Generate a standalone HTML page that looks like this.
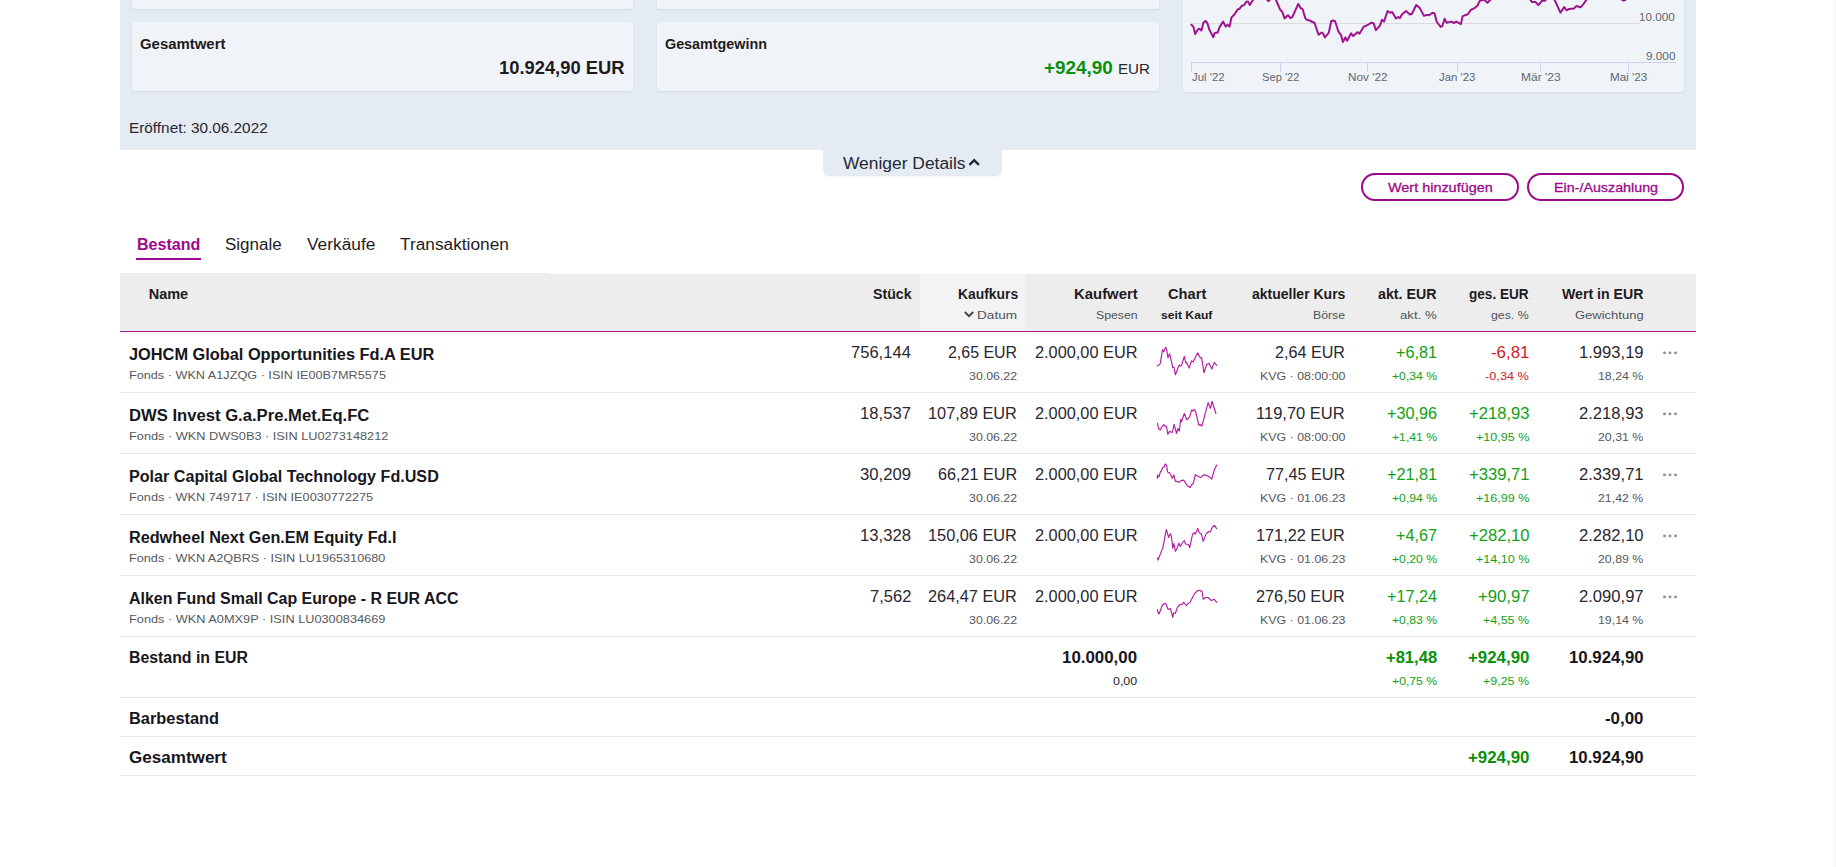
<!DOCTYPE html>
<html><head><meta charset="utf-8"><style>
html,body{margin:0;padding:0;background:#fff;width:1836px;height:867px;overflow:hidden;position:relative}
body{font-family:"Liberation Sans",sans-serif}
.t{position:absolute;white-space:nowrap;transform-origin:0 0}
.b{position:absolute;box-sizing:border-box}
.ov{position:absolute;left:0;top:0}
</style></head><body>
<div class="b" style="left:120px;top:0;width:1576px;height:150px;background:#e4ebf2"></div>
<div class="b" style="left:132px;top:-20px;width:500.5px;height:29px;background:#f0f4f8;border-radius:3px;box-shadow:0 1px 2px rgba(120,140,160,.16)"></div>
<div class="b" style="left:656.5px;top:-20px;width:502px;height:29px;background:#f0f4f8;border-radius:3px;box-shadow:0 1px 2px rgba(120,140,160,.16)"></div>
<div class="b" style="left:132px;top:22px;width:500.5px;height:68.5px;background:#f0f4f8;border-radius:3px;box-shadow:0 1px 2px rgba(120,140,160,.16)"></div>
<div class="b" style="left:656.5px;top:22px;width:502px;height:68.5px;background:#f0f4f8;border-radius:3px;box-shadow:0 1px 2px rgba(120,140,160,.16)"></div>
<div class="b" style="left:1183px;top:-20px;width:501px;height:111.5px;background:#f0f4f8;border-radius:3px;box-shadow:0 1px 2px rgba(120,140,160,.16)"></div>
<div class="b" style="left:822.5px;top:140px;width:179px;height:35px;background:#e4ebf2;border-radius:0 0 6px 6px;box-shadow:0 2px 2px -1px rgba(120,140,160,.25)"></div>
<div class="b" style="left:1361px;top:173px;width:158px;height:28px;border:2px solid #9a0a8a;border-radius:14px"></div>
<div class="b" style="left:1527px;top:173px;width:157px;height:28px;border:2px solid #9a0a8a;border-radius:14px"></div>
<div class="b" style="left:136px;top:258px;width:65px;height:2px;background:#9a0a8a"></div>
<div class="b" style="left:120px;top:273px;width:430px;height:58px;background:#ededed"></div>
<div class="b" style="left:550px;top:274px;width:1146px;height:57px;background:#ededed"></div>
<div class="b" style="left:920px;top:274px;width:105px;height:57px;background:#f3f3f3"></div>
<div class="b" style="left:1833px;top:0;width:3px;height:867px;background:#f9f9f9"></div>
<div class="b" style="left:120px;top:330.5px;width:1576px;height:1.5px;background:#a8208f"></div>
<div class="b" style="left:120px;top:392px;width:1576px;height:1px;background:#e9e9e9"></div>
<div class="b" style="left:120px;top:453px;width:1576px;height:1px;background:#e9e9e9"></div>
<div class="b" style="left:120px;top:514px;width:1576px;height:1px;background:#e9e9e9"></div>
<div class="b" style="left:120px;top:575px;width:1576px;height:1px;background:#e9e9e9"></div>
<div class="b" style="left:120px;top:636px;width:1576px;height:1px;background:#e9e9e9"></div>
<div class="b" style="left:120px;top:697px;width:1576px;height:1px;background:#e9e9e9"></div>
<div class="b" style="left:120px;top:736px;width:1576px;height:1px;background:#e9e9e9"></div>
<div class="b" style="left:120px;top:775px;width:1576px;height:1px;background:#e9e9e9"></div>
<svg class="ov" width="1836" height="867" viewBox="0 0 1836 867">
<line x1="1191" y1="23.5" x2="1640" y2="23.5" stroke="#dcdcdc" stroke-width="1"/>
<line x1="1191" y1="62.5" x2="1676" y2="62.5" stroke="#ccd1ee" stroke-width="1"/>
<line x1="1191.5" y1="62" x2="1191.5" y2="72" stroke="#ccd1ee" stroke-width="1"/>
<line x1="1280.5" y1="62" x2="1280.5" y2="72" stroke="#ccd1ee" stroke-width="1"/>
<line x1="1367.5" y1="62" x2="1367.5" y2="72" stroke="#ccd1ee" stroke-width="1"/>
<line x1="1457.5" y1="62" x2="1457.5" y2="72" stroke="#ccd1ee" stroke-width="1"/>
<line x1="1540.5" y1="62" x2="1540.5" y2="72" stroke="#ccd1ee" stroke-width="1"/>
<line x1="1628.5" y1="62" x2="1628.5" y2="72" stroke="#ccd1ee" stroke-width="1"/>
<polyline fill="none" stroke="#a0138f" stroke-width="2" stroke-linejoin="round" stroke-linecap="round" points="1191.4,24.8 1193.5,26.9 1195.1,34.0 1197.7,29.7 1199.5,28.7 1201.4,30.5 1203.4,22.7 1205.4,20.9 1207.3,23.0 1209.4,29.7 1213.3,37.2 1214.7,32.9 1217.6,32.6 1219.7,26.9 1223.2,21.6 1225.7,26.6 1227.5,24.8 1229.6,26.6 1231.4,17.7 1234.6,14.2 1237.8,9.2 1239.5,8.9 1241.7,5.7 1243.8,5.3 1246.3,1.8 1248.0,1.4 1249.8,5.0 1253.0,0.0 1258.0,-6.0 1263.0,-3.0 1267.5,0.0 1268.6,1.1 1269.6,0.0 1272.0,-4.0 1276.0,0.0 1279.9,9.2 1282.7,12.7 1284.5,18.4 1288.0,15.2 1290.5,18.1 1292.3,17.0 1298.3,3.9 1300.4,7.8 1302.6,9.2 1305.4,18.4 1306.8,19.8 1309.6,20.5 1314.6,23.0 1318.5,34.7 1321.7,32.6 1323.1,33.3 1324.9,37.5 1328.8,32.6 1331.2,21.2 1333.0,20.5 1335.1,21.2 1338.3,31.2 1341.2,35.4 1342.9,42.1 1345.4,37.5 1347.2,40.7 1351.1,33.3 1353.2,36.1 1357.5,32.2 1359.6,33.6 1363.8,26.6 1366.7,25.5 1371.6,22.7 1373.7,23.4 1375.9,30.1 1379.8,25.8 1381.9,19.8 1384.0,21.6 1387.6,11.0 1390.0,12.7 1392.2,12.0 1396.0,18.4 1398.2,17.0 1399.9,18.1 1402.1,14.2 1406.0,11.0 1409.9,14.5 1412.0,13.8 1416.2,5.0 1419.8,8.1 1424.0,15.9 1426.9,14.9 1429.0,15.2 1432.5,12.7 1434.6,13.5 1436.8,22.0 1440.7,26.9 1442.4,25.8 1444.6,18.8 1446.7,22.7 1451.3,21.6 1454.1,23.0 1456.2,21.6 1460.9,24.1 1462.6,16.3 1465.5,14.9 1467.6,14.5 1471.1,9.6 1474.0,8.5 1477.5,5.7 1479.6,1.1 1481.7,0.0 1484.6,0.0 1487.4,2.8 1490.2,0.0 1500.0,-8.0 1515.0,-10.0 1525.0,-5.0 1530.6,0.0 1532.0,2.1 1535.6,2.1 1538.4,5.0 1540.5,2.8 1541.9,0.7 1544.8,0.7 1545.5,0.0 1550.0,-4.0 1554.7,0.0 1560.4,12.7 1564.2,7.1 1566.7,10.3 1569.2,8.9 1573.8,8.5 1576.6,6.0 1580.5,7.4 1583.4,4.2 1586.2,0.0 1600.0,-10.0 1615.0,-5.0 1622.3,0.0 1623.7,0.7 1625.2,0.0 1632.0,-6.0"/>
<polyline fill="none" stroke="#b21ca2" stroke-width="1.15" stroke-linejoin="round" stroke-linecap="round" points="1157.3,366.0 1157.8,365.2 1159.3,365.0 1160.4,362.9 1162.5,349.7 1163.8,351.8 1165.6,347.3 1166.6,349.2 1167.9,357.7 1169.7,353.8 1172.8,367.6 1173.9,367.1 1175.4,374.8 1179.1,365.0 1180.6,366.0 1181.7,365.0 1184.3,356.4 1185.8,362.9 1186.6,362.4 1189.2,368.1 1191.5,360.8 1193.1,361.9 1197.7,352.8 1200.3,358.0 1201.6,357.7 1204.0,372.8 1206.6,364.5 1209.2,363.4 1211.8,369.1 1214.3,362.4 1216.7,365.5"/>
<polyline fill="none" stroke="#b21ca2" stroke-width="1.15" stroke-linejoin="round" stroke-linecap="round" points="1157.5,423.4 1158.8,429.1 1160.4,429.9 1161.4,427.5 1163.8,424.7 1165.0,426.2 1166.3,426.0 1167.9,434.3 1169.5,431.4 1172.3,432.5 1174.1,424.4 1176.5,433.5 1177.8,428.3 1179.3,431.2 1180.6,419.5 1181.4,421.8 1184.3,413.5 1186.8,419.8 1189.7,416.9 1191.5,410.2 1193.1,410.9 1194.4,409.4 1195.7,412.0 1198.8,425.2 1200.1,424.4 1201.9,426.2 1208.1,402.6 1210.5,408.3 1212.0,401.3 1215.9,413.5"/>
<polyline fill="none" stroke="#b21ca2" stroke-width="1.15" stroke-linejoin="round" stroke-linecap="round" points="1157.3,478.3 1157.5,474.9 1158.6,476.8 1159.3,476.2 1160.4,471.6 1161.4,471.0 1162.7,467.4 1163.8,467.2 1165.3,464.0 1166.6,465.3 1167.6,472.1 1169.7,473.1 1172.3,478.3 1173.9,474.9 1175.4,481.4 1177.5,481.4 1179.3,482.5 1180.9,480.6 1183.7,480.1 1187.4,485.8 1190.2,487.4 1191.5,484.8 1193.1,484.0 1195.4,474.7 1196.7,475.5 1200.3,477.5 1201.4,477.3 1203.5,474.9 1205.0,474.9 1208.9,476.5 1211.8,479.1 1214.3,470.0 1216.7,465.1"/>
<polyline fill="none" stroke="#b21ca2" stroke-width="1.15" stroke-linejoin="round" stroke-linecap="round" points="1157.5,558.0 1158.0,560.1 1163.0,547.1 1166.3,529.5 1168.7,537.5 1170.2,533.6 1171.3,535.7 1172.8,548.1 1173.9,543.5 1175.4,551.3 1176.7,549.2 1178.8,543.2 1180.4,546.6 1181.9,543.5 1184.3,540.6 1185.5,544.0 1188.4,544.5 1189.7,547.6 1192.6,534.1 1194.1,532.6 1195.4,534.1 1197.7,528.4 1199.3,532.8 1201.4,534.1 1203.2,541.4 1206.0,534.1 1208.6,531.5 1210.2,532.0 1212.3,527.4 1214.3,525.3 1216.7,528.7"/>
<polyline fill="none" stroke="#b21ca2" stroke-width="1.15" stroke-linejoin="round" stroke-linecap="round" points="1157.3,609.7 1158.6,613.8 1159.1,613.8 1162.5,605.0 1165.0,603.4 1166.3,604.5 1167.9,609.1 1169.2,609.1 1170.5,608.6 1172.8,617.4 1173.6,612.8 1175.4,613.3 1177.5,607.1 1180.1,604.5 1181.7,604.5 1183.7,602.4 1186.3,605.5 1188.4,603.4 1190.2,602.1 1194.6,593.6 1197.7,590.5 1200.3,590.5 1202.2,592.0 1203.2,599.3 1205.5,597.5 1208.1,597.5 1211.5,600.6 1214.3,599.3 1216.7,602.4"/>
<polyline fill="none" stroke="#1f2a36" stroke-width="2.4" points="969.5,164.8 974.2,160.1 978.9,164.8"/>
<polyline fill="none" stroke="#444" stroke-width="2" points="964.8,312 969,316.2 973.2,312"/>
<circle cx="1664.5" cy="352.9" r="1.45" fill="#8c9094"/>
<circle cx="1670.0" cy="352.9" r="1.45" fill="#8c9094"/>
<circle cx="1675.5" cy="352.9" r="1.45" fill="#8c9094"/>
<circle cx="1664.5" cy="413.9" r="1.45" fill="#8c9094"/>
<circle cx="1670.0" cy="413.9" r="1.45" fill="#8c9094"/>
<circle cx="1675.5" cy="413.9" r="1.45" fill="#8c9094"/>
<circle cx="1664.5" cy="474.9" r="1.45" fill="#8c9094"/>
<circle cx="1670.0" cy="474.9" r="1.45" fill="#8c9094"/>
<circle cx="1675.5" cy="474.9" r="1.45" fill="#8c9094"/>
<circle cx="1664.5" cy="535.9" r="1.45" fill="#8c9094"/>
<circle cx="1670.0" cy="535.9" r="1.45" fill="#8c9094"/>
<circle cx="1675.5" cy="535.9" r="1.45" fill="#8c9094"/>
<circle cx="1664.5" cy="596.9" r="1.45" fill="#8c9094"/>
<circle cx="1670.0" cy="596.9" r="1.45" fill="#8c9094"/>
<circle cx="1675.5" cy="596.9" r="1.45" fill="#8c9094"/>
</svg>
<span class="t" style="left:140.40px;top:37.00px;font-size:14.50px;line-height:14.50px;color:#1e1b1f;font-weight:bold;transform:scaleX(1.0289)">Gesamtwert</span>
<span class="t" style="left:498.70px;top:59.00px;font-size:18.30px;line-height:18.30px;color:#1e1b1f;font-weight:bold;transform:scaleX(1.0032)">10.924,90 EUR</span>
<span class="t" style="left:665.40px;top:37.00px;font-size:14.50px;line-height:14.50px;color:#1e1b1f;font-weight:bold;transform:scaleX(0.9884)">Gesamtgewinn</span>
<span class="t" style="left:1043.50px;top:59.00px;font-size:18.30px;line-height:18.30px;color:#0a900a;font-weight:bold;transform:scaleX(1.0330)">+924,90</span>
<span class="t" style="left:1118.00px;top:61.00px;font-size:15.00px;line-height:15.00px;color:#2a2730;transform:scaleX(1.0095)">EUR</span>
<span class="t" style="left:128.80px;top:121.00px;font-size:14.30px;line-height:14.30px;color:#2a2730;transform:scaleX(1.0727)">Eröffnet: 30.06.2022</span>
<span class="t" style="left:1639.30px;top:12.00px;font-size:11.00px;line-height:11.00px;color:#5f6670;transform:scaleX(1.0625)">10.000</span>
<span class="t" style="left:1645.80px;top:51.00px;font-size:11.00px;line-height:11.00px;color:#5f6670;transform:scaleX(1.0691)">9.000</span>
<span class="t" style="left:1191.80px;top:72.00px;font-size:11.00px;line-height:11.00px;color:#5f6670;transform:scaleX(1.0381)">Jul '22</span>
<span class="t" style="left:1261.90px;top:72.00px;font-size:11.00px;line-height:11.00px;color:#5f6670;transform:scaleX(1.0135)">Sep '22</span>
<span class="t" style="left:1348.40px;top:72.00px;font-size:11.00px;line-height:11.00px;color:#5f6670;transform:scaleX(1.0676)">Nov '22</span>
<span class="t" style="left:1439.00px;top:72.00px;font-size:11.00px;line-height:11.00px;color:#5f6670;transform:scaleX(1.0370)">Jan '23</span>
<span class="t" style="left:1521.00px;top:72.00px;font-size:11.00px;line-height:11.00px;color:#5f6670;transform:scaleX(1.0909)">Mär '23</span>
<span class="t" style="left:1610.00px;top:72.00px;font-size:11.00px;line-height:11.00px;color:#5f6670;transform:scaleX(1.0627)">Mai '23</span>
<span class="t" style="left:842.70px;top:156.00px;font-size:16.00px;line-height:16.00px;color:#1f2a36;transform:scaleX(1.0879)">Weniger Details</span>
<span class="t" style="left:1387.80px;top:181.00px;font-size:13.10px;line-height:13.10px;color:#9a0a8a;-webkit-text-stroke:0.3px #9a0a8a;transform:scaleX(1.1008)">Wert hinzufügen</span>
<span class="t" style="left:1553.80px;top:181.00px;font-size:13.10px;line-height:13.10px;color:#9a0a8a;-webkit-text-stroke:0.3px #9a0a8a;transform:scaleX(1.0912)">Ein-/Auszahlung</span>
<span class="t" style="left:136.90px;top:237.00px;font-size:16.00px;line-height:16.00px;color:#9a0a8a;font-weight:bold;transform:scaleX(1.0048)">Bestand</span>
<span class="t" style="left:225.20px;top:237.00px;font-size:16.00px;line-height:16.00px;color:#1f1d24;transform:scaleX(1.0618)">Signale</span>
<span class="t" style="left:306.70px;top:237.00px;font-size:16.00px;line-height:16.00px;color:#1f1d24;transform:scaleX(1.0823)">Verkäufe</span>
<span class="t" style="left:400.20px;top:237.00px;font-size:16.00px;line-height:16.00px;color:#1f1d24;transform:scaleX(1.0804)">Transaktionen</span>
<span class="t" style="left:148.70px;top:287.00px;font-size:14.50px;line-height:14.50px;color:#1e1b1f;font-weight:bold">Name</span>
<span class="t" style="left:873.40px;top:287.00px;font-size:14.50px;line-height:14.50px;color:#1e1b1f;font-weight:bold;transform:scaleX(0.9772)">Stück</span>
<span class="t" style="left:957.60px;top:287.00px;font-size:14.50px;line-height:14.50px;color:#1e1b1f;font-weight:bold;transform:scaleX(0.9571)">Kaufkurs</span>
<span class="t" style="left:977.40px;top:310.00px;font-size:11.30px;line-height:11.30px;color:#50535a;transform:scaleX(1.2042)">Datum</span>
<span class="t" style="left:1073.50px;top:287.00px;font-size:14.50px;line-height:14.50px;color:#1e1b1f;font-weight:bold;transform:scaleX(1.0274)">Kaufwert</span>
<span class="t" style="left:1095.60px;top:310.00px;font-size:11.30px;line-height:11.30px;color:#50535a;transform:scaleX(1.0862)">Spesen</span>
<span class="t" style="left:1167.50px;top:287.00px;font-size:14.50px;line-height:14.50px;color:#1e1b1f;font-weight:bold;transform:scaleX(1.0106)">Chart</span>
<span class="t" style="left:1160.80px;top:310.00px;font-size:11.30px;line-height:11.30px;color:#1e1b1f;font-weight:bold;transform:scaleX(1.0774)">seit Kauf</span>
<span class="t" style="left:1251.80px;top:287.00px;font-size:14.50px;line-height:14.50px;color:#1e1b1f;font-weight:bold;transform:scaleX(0.9659)">aktueller Kurs</span>
<span class="t" style="left:1313.20px;top:310.00px;font-size:11.30px;line-height:11.30px;color:#50535a;transform:scaleX(1.0847)">Börse</span>
<span class="t" style="left:1378.30px;top:287.00px;font-size:14.50px;line-height:14.50px;color:#1e1b1f;font-weight:bold;transform:scaleX(0.9799)">akt. EUR</span>
<span class="t" style="left:1399.90px;top:310.00px;font-size:11.30px;line-height:11.30px;color:#50535a;transform:scaleX(1.1720)">akt. %</span>
<span class="t" style="left:1469.30px;top:287.00px;font-size:14.50px;line-height:14.50px;color:#1e1b1f;font-weight:bold;transform:scaleX(0.9356)">ges. EUR</span>
<span class="t" style="left:1491.30px;top:310.00px;font-size:11.30px;line-height:11.30px;color:#50535a;transform:scaleX(1.0899)">ges. %</span>
<span class="t" style="left:1562.00px;top:287.00px;font-size:14.50px;line-height:14.50px;color:#1e1b1f;font-weight:bold;transform:scaleX(0.9749)">Wert in EUR</span>
<span class="t" style="left:1574.50px;top:310.00px;font-size:11.30px;line-height:11.30px;color:#50535a;transform:scaleX(1.1508)">Gewichtung</span>
<span class="t" style="left:128.60px;top:347.00px;font-size:16.00px;line-height:16.00px;color:#17161c;font-weight:bold;transform:scaleX(1.0211)">JOHCM Global Opportunities Fd.A EUR</span>
<span class="t" style="left:128.60px;top:369.00px;font-size:11.60px;line-height:11.60px;color:#57585c;transform:scaleX(1.0926)">Fonds · WKN A1JZQG · ISIN IE00B7MR5575</span>
<span class="t" style="left:851.40px;top:345.00px;font-size:16.00px;line-height:16.00px;color:#2a2730;transform:scaleX(1.0346)">756,144</span>
<span class="t" style="left:948.10px;top:345.00px;font-size:16.00px;line-height:16.00px;color:#2a2730;transform:scaleX(0.9957)">2,65 EUR</span>
<span class="t" style="left:968.80px;top:370.00px;font-size:11.60px;line-height:11.60px;color:#57585c;transform:scaleX(1.0664)">30.06.22</span>
<span class="t" style="left:1034.50px;top:345.00px;font-size:16.00px;line-height:16.00px;color:#2a2730;transform:scaleX(1.0199)">2.000,00 EUR</span>
<span class="t" style="left:1275.00px;top:345.00px;font-size:16.00px;line-height:16.00px;color:#2a2730;transform:scaleX(1.0086)">2,64 EUR</span>
<span class="t" style="left:1259.50px;top:370.00px;font-size:11.60px;line-height:11.60px;color:#57585c;transform:scaleX(1.0688)">KVG · 08:00:00</span>
<span class="t" style="left:1395.80px;top:345.00px;font-size:16.00px;line-height:16.00px;color:#14a014;transform:scaleX(1.0099)">+6,81</span>
<span class="t" style="left:1391.60px;top:370.00px;font-size:11.60px;line-height:11.60px;color:#14a014;transform:scaleX(1.0513)">+0,34 %</span>
<span class="t" style="left:1490.60px;top:345.00px;font-size:16.00px;line-height:16.00px;color:#cf1b26;transform:scaleX(1.0521)">-6,81</span>
<span class="t" style="left:1485.00px;top:370.00px;font-size:11.60px;line-height:11.60px;color:#cf1b26;transform:scaleX(1.1000)">-0,34 %</span>
<span class="t" style="left:1578.80px;top:345.00px;font-size:16.00px;line-height:16.00px;color:#2a2730;transform:scaleX(1.0369)">1.993,19</span>
<span class="t" style="left:1597.80px;top:370.00px;font-size:11.60px;line-height:11.60px;color:#57585c;transform:scaleX(1.0657)">18,24 %</span>
<span class="t" style="left:128.60px;top:408.00px;font-size:16.00px;line-height:16.00px;color:#17161c;font-weight:bold;transform:scaleX(1.0398)">DWS Invest G.a.Pre.Met.Eq.FC</span>
<span class="t" style="left:128.60px;top:430.00px;font-size:11.60px;line-height:11.60px;color:#57585c;transform:scaleX(1.0996)">Fonds · WKN DWS0B3 · ISIN LU0273148212</span>
<span class="t" style="left:860.30px;top:406.00px;font-size:16.00px;line-height:16.00px;color:#2a2730;transform:scaleX(1.0409)">18,537</span>
<span class="t" style="left:928.30px;top:406.00px;font-size:16.00px;line-height:16.00px;color:#2a2730;transform:scaleX(1.0195)">107,89 EUR</span>
<span class="t" style="left:968.80px;top:431.00px;font-size:11.60px;line-height:11.60px;color:#57585c;transform:scaleX(1.0664)">30.06.22</span>
<span class="t" style="left:1034.50px;top:406.00px;font-size:16.00px;line-height:16.00px;color:#2a2730;transform:scaleX(1.0199)">2.000,00 EUR</span>
<span class="t" style="left:1256.30px;top:406.00px;font-size:16.00px;line-height:16.00px;color:#2a2730;transform:scaleX(1.0314)">119,70 EUR</span>
<span class="t" style="left:1259.50px;top:431.00px;font-size:11.60px;line-height:11.60px;color:#57585c;transform:scaleX(1.0688)">KVG · 08:00:00</span>
<span class="t" style="left:1386.60px;top:406.00px;font-size:16.00px;line-height:16.00px;color:#14a014;transform:scaleX(1.0142)">+30,96</span>
<span class="t" style="left:1391.60px;top:431.00px;font-size:11.60px;line-height:11.60px;color:#14a014;transform:scaleX(1.0513)">+1,41 %</span>
<span class="t" style="left:1468.50px;top:406.00px;font-size:16.00px;line-height:16.00px;color:#14a014;transform:scaleX(1.0377)">+218,93</span>
<span class="t" style="left:1475.50px;top:431.00px;font-size:11.60px;line-height:11.60px;color:#14a014;transform:scaleX(1.0852)">+10,95 %</span>
<span class="t" style="left:1578.80px;top:406.00px;font-size:16.00px;line-height:16.00px;color:#2a2730;transform:scaleX(1.0369)">2.218,93</span>
<span class="t" style="left:1597.80px;top:431.00px;font-size:11.60px;line-height:11.60px;color:#57585c;transform:scaleX(1.0657)">20,31 %</span>
<span class="t" style="left:128.60px;top:469.00px;font-size:16.00px;line-height:16.00px;color:#17161c;font-weight:bold;transform:scaleX(1.0081)">Polar Capital Global Technology Fd.USD</span>
<span class="t" style="left:128.60px;top:491.00px;font-size:11.60px;line-height:11.60px;color:#57585c;transform:scaleX(1.0950)">Fonds · WKN 749717 · ISIN IE0030772275</span>
<span class="t" style="left:860.30px;top:467.00px;font-size:16.00px;line-height:16.00px;color:#2a2730;transform:scaleX(1.0409)">30,209</span>
<span class="t" style="left:937.90px;top:467.00px;font-size:16.00px;line-height:16.00px;color:#2a2730;transform:scaleX(1.0128)">66,21 EUR</span>
<span class="t" style="left:968.80px;top:492.00px;font-size:11.60px;line-height:11.60px;color:#57585c;transform:scaleX(1.0664)">30.06.22</span>
<span class="t" style="left:1034.50px;top:467.00px;font-size:16.00px;line-height:16.00px;color:#2a2730;transform:scaleX(1.0199)">2.000,00 EUR</span>
<span class="t" style="left:1265.80px;top:467.00px;font-size:16.00px;line-height:16.00px;color:#2a2730;transform:scaleX(1.0115)">77,45 EUR</span>
<span class="t" style="left:1259.50px;top:492.00px;font-size:11.60px;line-height:11.60px;color:#57585c;transform:scaleX(1.0688)">KVG · 01.06.23</span>
<span class="t" style="left:1386.60px;top:467.00px;font-size:16.00px;line-height:16.00px;color:#14a014;transform:scaleX(1.0142)">+21,81</span>
<span class="t" style="left:1391.60px;top:492.00px;font-size:11.60px;line-height:11.60px;color:#14a014;transform:scaleX(1.0513)">+0,94 %</span>
<span class="t" style="left:1468.50px;top:467.00px;font-size:16.00px;line-height:16.00px;color:#14a014;transform:scaleX(1.0377)">+339,71</span>
<span class="t" style="left:1475.50px;top:492.00px;font-size:11.60px;line-height:11.60px;color:#14a014;transform:scaleX(1.0852)">+16,99 %</span>
<span class="t" style="left:1578.80px;top:467.00px;font-size:16.00px;line-height:16.00px;color:#2a2730;transform:scaleX(1.0369)">2.339,71</span>
<span class="t" style="left:1597.80px;top:492.00px;font-size:11.60px;line-height:11.60px;color:#57585c;transform:scaleX(1.0657)">21,42 %</span>
<span class="t" style="left:128.60px;top:530.00px;font-size:16.00px;line-height:16.00px;color:#17161c;font-weight:bold;transform:scaleX(1.0129)">Redwheel Next Gen.EM Equity Fd.I</span>
<span class="t" style="left:128.60px;top:552.00px;font-size:11.60px;line-height:11.60px;color:#57585c;transform:scaleX(1.0929)">Fonds · WKN A2QBRS · ISIN LU1965310680</span>
<span class="t" style="left:860.30px;top:528.00px;font-size:16.00px;line-height:16.00px;color:#2a2730;transform:scaleX(1.0409)">13,328</span>
<span class="t" style="left:928.30px;top:528.00px;font-size:16.00px;line-height:16.00px;color:#2a2730;transform:scaleX(1.0195)">150,06 EUR</span>
<span class="t" style="left:968.80px;top:553.00px;font-size:11.60px;line-height:11.60px;color:#57585c;transform:scaleX(1.0664)">30.06.22</span>
<span class="t" style="left:1034.50px;top:528.00px;font-size:16.00px;line-height:16.00px;color:#2a2730;transform:scaleX(1.0199)">2.000,00 EUR</span>
<span class="t" style="left:1256.30px;top:528.00px;font-size:16.00px;line-height:16.00px;color:#2a2730;transform:scaleX(1.0172)">171,22 EUR</span>
<span class="t" style="left:1259.50px;top:553.00px;font-size:11.60px;line-height:11.60px;color:#57585c;transform:scaleX(1.0688)">KVG · 01.06.23</span>
<span class="t" style="left:1395.80px;top:528.00px;font-size:16.00px;line-height:16.00px;color:#14a014;transform:scaleX(1.0099)">+4,67</span>
<span class="t" style="left:1391.60px;top:553.00px;font-size:11.60px;line-height:11.60px;color:#14a014;transform:scaleX(1.0513)">+0,20 %</span>
<span class="t" style="left:1468.50px;top:528.00px;font-size:16.00px;line-height:16.00px;color:#14a014;transform:scaleX(1.0377)">+282,10</span>
<span class="t" style="left:1475.50px;top:553.00px;font-size:11.60px;line-height:11.60px;color:#14a014;transform:scaleX(1.0852)">+14,10 %</span>
<span class="t" style="left:1578.80px;top:528.00px;font-size:16.00px;line-height:16.00px;color:#2a2730;transform:scaleX(1.0369)">2.282,10</span>
<span class="t" style="left:1597.80px;top:553.00px;font-size:11.60px;line-height:11.60px;color:#57585c;transform:scaleX(1.0657)">20,89 %</span>
<span class="t" style="left:128.60px;top:591.00px;font-size:16.00px;line-height:16.00px;color:#17161c;font-weight:bold;transform:scaleX(0.9952)">Alken Fund Small Cap Europe - R EUR ACC</span>
<span class="t" style="left:128.60px;top:613.00px;font-size:11.60px;line-height:11.60px;color:#57585c;transform:scaleX(1.0999)">Fonds · WKN A0MX9P · ISIN LU0300834669</span>
<span class="t" style="left:869.80px;top:589.00px;font-size:16.00px;line-height:16.00px;color:#2a2730;transform:scaleX(1.0350)">7,562</span>
<span class="t" style="left:928.30px;top:589.00px;font-size:16.00px;line-height:16.00px;color:#2a2730;transform:scaleX(1.0195)">264,47 EUR</span>
<span class="t" style="left:968.80px;top:614.00px;font-size:11.60px;line-height:11.60px;color:#57585c;transform:scaleX(1.0664)">30.06.22</span>
<span class="t" style="left:1034.50px;top:589.00px;font-size:16.00px;line-height:16.00px;color:#2a2730;transform:scaleX(1.0199)">2.000,00 EUR</span>
<span class="t" style="left:1256.30px;top:589.00px;font-size:16.00px;line-height:16.00px;color:#2a2730;transform:scaleX(1.0172)">276,50 EUR</span>
<span class="t" style="left:1259.50px;top:614.00px;font-size:11.60px;line-height:11.60px;color:#57585c;transform:scaleX(1.0688)">KVG · 01.06.23</span>
<span class="t" style="left:1386.60px;top:589.00px;font-size:16.00px;line-height:16.00px;color:#14a014;transform:scaleX(1.0142)">+17,24</span>
<span class="t" style="left:1391.60px;top:614.00px;font-size:11.60px;line-height:11.60px;color:#14a014;transform:scaleX(1.0513)">+0,83 %</span>
<span class="t" style="left:1477.50px;top:589.00px;font-size:16.00px;line-height:16.00px;color:#14a014;transform:scaleX(1.0425)">+90,97</span>
<span class="t" style="left:1483.00px;top:614.00px;font-size:11.60px;line-height:11.60px;color:#14a014;transform:scaleX(1.0723)">+4,55 %</span>
<span class="t" style="left:1578.80px;top:589.00px;font-size:16.00px;line-height:16.00px;color:#2a2730;transform:scaleX(1.0369)">2.090,97</span>
<span class="t" style="left:1597.80px;top:614.00px;font-size:11.60px;line-height:11.60px;color:#57585c;transform:scaleX(1.0657)">19,14 %</span>
<span class="t" style="left:128.60px;top:650.00px;font-size:16.00px;line-height:16.00px;color:#17161c;font-weight:bold;transform:scaleX(0.9908)">Bestand in EUR</span>
<span class="t" style="left:1062.10px;top:650.00px;font-size:16.00px;line-height:16.00px;color:#17161c;font-weight:bold;transform:scaleX(1.0548)">10.000,00</span>
<span class="t" style="left:1112.80px;top:675.00px;font-size:11.60px;line-height:11.60px;color:#2a2730;transform:scaleX(1.0708)">0,00</span>
<span class="t" style="left:1385.80px;top:650.00px;font-size:16.00px;line-height:16.00px;color:#0a900a;font-weight:bold;transform:scaleX(1.0344)">+81,48</span>
<span class="t" style="left:1391.50px;top:675.00px;font-size:11.60px;line-height:11.60px;color:#14a014;transform:scaleX(1.0536)">+0,75 %</span>
<span class="t" style="left:1467.80px;top:650.00px;font-size:16.00px;line-height:16.00px;color:#0a900a;font-weight:bold;transform:scaleX(1.0532)">+924,90</span>
<span class="t" style="left:1483.00px;top:675.00px;font-size:11.60px;line-height:11.60px;color:#14a014;transform:scaleX(1.0723)">+9,25 %</span>
<span class="t" style="left:1568.80px;top:650.00px;font-size:16.00px;line-height:16.00px;color:#17161c;font-weight:bold;transform:scaleX(1.0492)">10.924,90</span>
<span class="t" style="left:128.60px;top:711.00px;font-size:16.00px;line-height:16.00px;color:#17161c;font-weight:bold;transform:scaleX(1.0227)">Barbestand</span>
<span class="t" style="left:1605.00px;top:711.00px;font-size:16.00px;line-height:16.00px;color:#17161c;font-weight:bold;transform:scaleX(1.0548)">-0,00</span>
<span class="t" style="left:128.60px;top:750.00px;font-size:16.00px;line-height:16.00px;color:#17161c;font-weight:bold;transform:scaleX(1.0666)">Gesamtwert</span>
<span class="t" style="left:1467.80px;top:750.00px;font-size:16.00px;line-height:16.00px;color:#0a900a;font-weight:bold;transform:scaleX(1.0532)">+924,90</span>
<span class="t" style="left:1568.80px;top:750.00px;font-size:16.00px;line-height:16.00px;color:#17161c;font-weight:bold;transform:scaleX(1.0492)">10.924,90</span>
</body></html>
